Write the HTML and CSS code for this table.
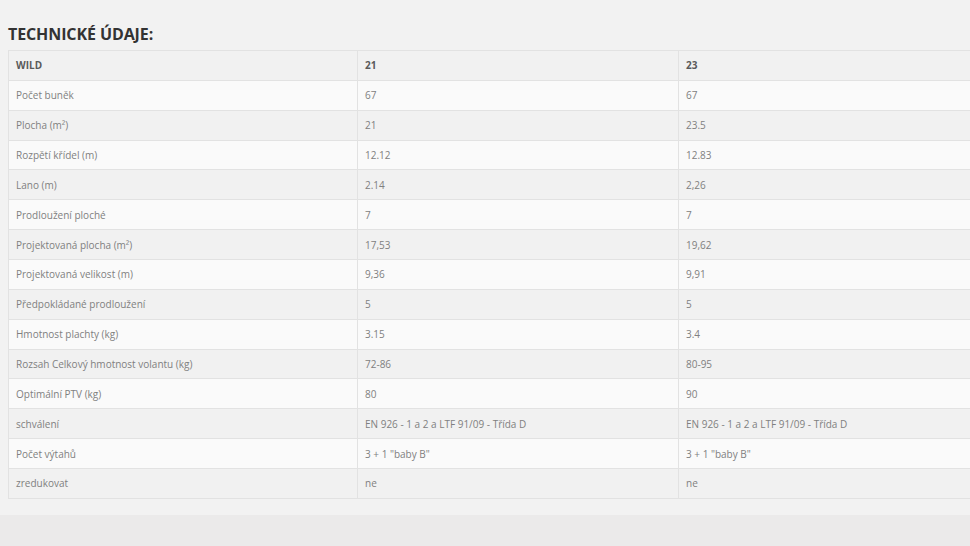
FILE: index.html
```html
<!DOCTYPE html>
<html lang="cs">
<head>
<meta charset="utf-8">
<title>Technické údaje</title>
<link rel="stylesheet" href="styles.css">
</head>
<body>
<main class="content">
  <h2 class="title">TECHNICKÉ ÚDAJE:</h2>
  <table class="specs">
    <colgroup><col class="c1"><col class="c2"><col class="c3"></colgroup>
    <thead>
      <tr><th>WILD</th><th>21</th><th>23</th></tr>
    </thead>
    <tbody>
      <tr><td>Počet buněk</td><td>67</td><td>67</td></tr>
      <tr><td>Plocha (m²)</td><td>21</td><td>23.5</td></tr>
      <tr><td>Rozpětí křídel (m)</td><td>12.12</td><td>12.83</td></tr>
      <tr><td>Lano (m)</td><td>2.14</td><td>2,26</td></tr>
      <tr><td>Prodloužení ploché</td><td>7</td><td>7</td></tr>
      <tr><td>Projektovaná plocha (m²)</td><td>17,53</td><td>19,62</td></tr>
      <tr><td>Projektovaná velikost (m)</td><td>9,36</td><td>9,91</td></tr>
      <tr><td>Předpokládané prodloužení</td><td>5</td><td>5</td></tr>
      <tr><td>Hmotnost plachty (kg)</td><td>3.15</td><td>3.4</td></tr>
      <tr><td>Rozsah Celkový hmotnost volantu (kg)</td><td>72-86</td><td>80-95</td></tr>
      <tr><td>Optimální PTV (kg)</td><td>80</td><td>90</td></tr>
      <tr><td>schválení</td><td>EN 926 - 1 a 2 a LTF 91/09 - Třída D</td><td>EN 926 - 1 a 2 a LTF 91/09 - Třída D</td></tr>
      <tr><td>Počet výtahů</td><td>3 + 1 "baby B"</td><td>3 + 1 "baby B"</td></tr>
      <tr><td>zredukovat</td><td>ne</td><td>ne</td></tr>
    </tbody>
  </table>
</main>
<footer class="footer"></footer>
</body>
</html>
```
FILE: styles.css
```css
html, body {
  margin: 0;
  padding: 0;
  overflow: hidden;
  background: #f2f2f2;
}
body {
  font-family: "Open Sans", "Liberation Sans", sans-serif;
  color: #808080;
  width: 970px;
}
.content {
  padding: 24px 0 16px 8px;
}
.title {
  margin: 0 0 6px;
  font-size: 16px;
  line-height: 20px;
  font-weight: 700;
  color: #333;
  letter-spacing: -0.1px;
}
.specs {
  border-collapse: collapse;
  width: 992px;
  table-layout: fixed;
  font-size: 10px;
}
.c1 { width: 349px; }
.c2 { width: 321px; }
.c3 { width: 322px; }
.specs th,
.specs td {
  border: 1px solid #e2e2e2;
  height: 29.86px;
  padding: 0 7px;
  text-align: left;
  vertical-align: middle;
  line-height: 14px;
  box-sizing: border-box;
}
.specs th {
  font-weight: 700;
  color: #5a5a5a;
  background: #f1f1f1;
}
.specs tbody tr:nth-child(odd) td { background: #fafafa; }
.specs tbody tr:nth-child(even) td { background: #f1f1f1; }
.footer {
  height: 40px;
  background: #ebeaea;
}
```
